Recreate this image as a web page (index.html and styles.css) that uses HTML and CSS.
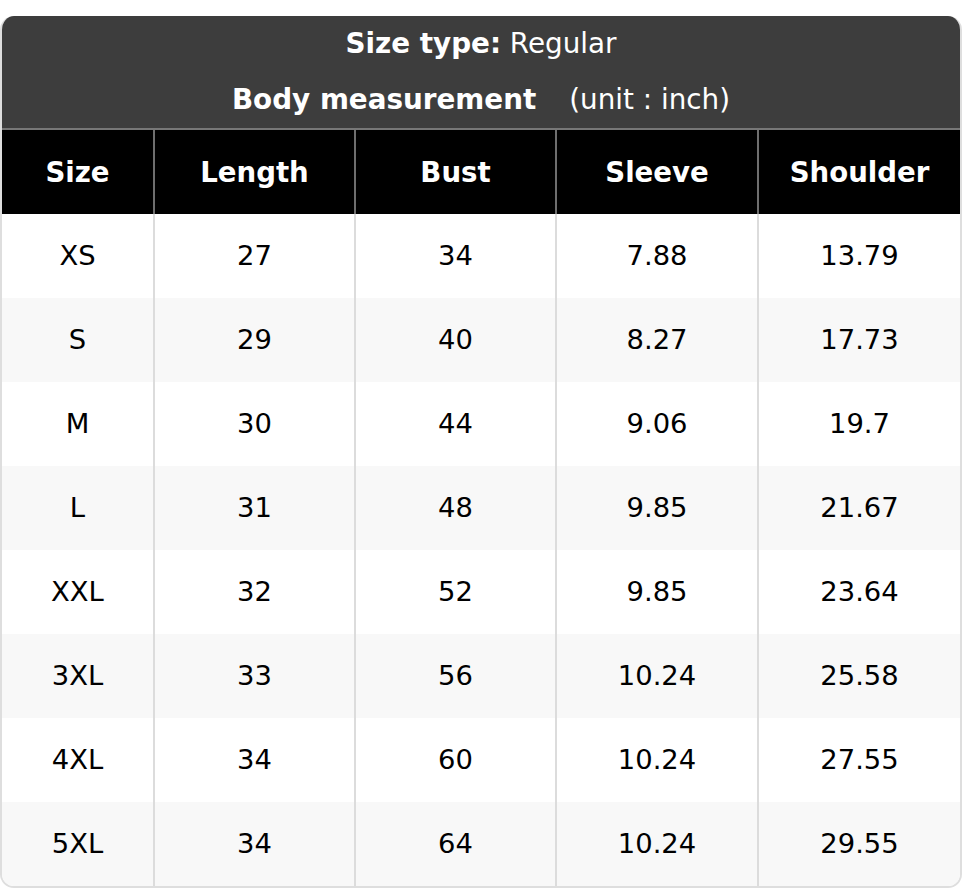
FILE: index.html
```html
<!DOCTYPE html>
<html lang="en">
<head>
<meta charset="utf-8">
<title>Size chart</title>
<link rel="stylesheet" href="styles.css">
</head>
<body>
<div class="card">
  <div class="caption">
    <div class="caption-line"><b>Size type:</b> Regular</div>
    <div class="caption-line"><b>Body measurement</b><span class="unit">(unit : inch)</span></div>
  </div>
  <table class="chart">
    <thead>
      <tr><th>Size</th><th>Length</th><th>Bust</th><th>Sleeve</th><th>Shoulder</th></tr>
    </thead>
    <tbody>
      <tr><td>XS</td><td>27</td><td>34</td><td>7.88</td><td>13.79</td></tr>
      <tr><td>S</td><td>29</td><td>40</td><td>8.27</td><td>17.73</td></tr>
      <tr><td>M</td><td>30</td><td>44</td><td>9.06</td><td>19.7</td></tr>
      <tr><td>L</td><td>31</td><td>48</td><td>9.85</td><td>21.67</td></tr>
      <tr><td>XXL</td><td>32</td><td>52</td><td>9.85</td><td>23.64</td></tr>
      <tr><td>3XL</td><td>33</td><td>56</td><td>10.24</td><td>25.58</td></tr>
      <tr><td>4XL</td><td>34</td><td>60</td><td>10.24</td><td>27.55</td></tr>
      <tr><td>5XL</td><td>34</td><td>64</td><td>10.24</td><td>29.55</td></tr>
    </tbody>
  </table>
</div>
</body>
</html>
```
FILE: styles.css
```css
html, body {
  margin: 0;
  padding: 0;
  background: #ffffff;
}
body {
  padding-top: 16px;
  font-family: "DejaVu Sans", "Liberation Sans", sans-serif;
  color: #000;
}
.card {
  width: 962px;
  box-sizing: border-box;
  border: 2px solid #dedede;
  border-top: none;
  border-radius: 14px;
  overflow: hidden;
  background: #fff;
}
.caption {
  background: #3d3d3d;
  color: #fff;
  text-align: center;
  font-size: 27.8px;
  border-bottom: 2px solid #777;
  margin: 0 -2px;
}
.caption-line {
  height: 56px;
  line-height: 55px;
}
.unit {
  margin-left: 33px;
}
.chart {
  width: 100%;
  border-collapse: collapse;
  table-layout: fixed;
  font-size: 27.4px;
  text-align: center;
}
.chart th, .chart td {
  height: 84px;
  padding: 0;
  box-sizing: border-box;
}
.chart th {
  background: #000;
  color: #fff;
  font-weight: bold;
  font-size: 27.6px;
  border-left: 2px solid #6e6e6e;
}
.chart td {
  border-left: 2px solid #dcdcdc;
  padding-bottom: 1px;
}
.chart th:first-child, .chart td:first-child {
  border-left: none;
  width: 152px;
}
.chart th:nth-child(2), .chart td:nth-child(2) { width: 201px; }
.chart th:nth-child(3), .chart td:nth-child(3) { width: 201px; }
.chart th:nth-child(4), .chart td:nth-child(4) { width: 202px; }
.chart tbody tr:nth-child(even) td {
  background: #f8f8f8;
}
```
